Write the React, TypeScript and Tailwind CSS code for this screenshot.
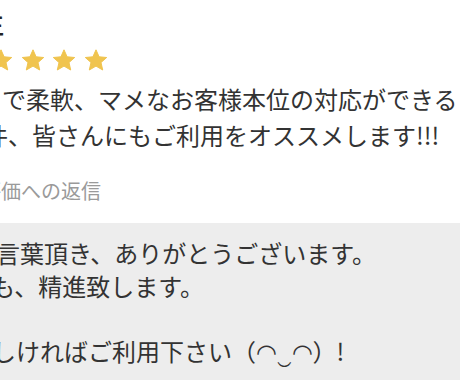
const STAR_COUNT = 4;

function Star() {
  return (
    <svg width="24" height="23" viewBox="0 0 24 23" className="shrink-0">
      <path
        d="M12 0.8l3.1 7 7.6 0.7-5.7 5 1.7 7.5L12 17.1 5.3 21l1.7-7.5-5.7-5 7.6-0.7z"
        fill="#f0c44f"
        stroke="#f0c44f"
        strokeWidth="1"
        strokeLinejoin="round"
      />
    </svg>
  );
}

export default function App() {
  return (
    <div
      className="flex h-[380px] w-[460px] flex-col overflow-hidden bg-white text-[#333]"
      style={{ fontFamily: '"Noto Sans CJK JP", "Noto Sans", sans-serif' }}
    >
      <div className="ml-[-18px] mt-[10px] text-[22px] font-bold leading-[28px] text-[#222]">王</div>

      <div className="ml-[-11px] mt-[11px] flex gap-[7.5px]">
        {Array.from({ length: STAR_COUNT }).map((_, i) => (
          <Star key={i} />
        ))}
      </div>

      <div className="mt-[9px] whitespace-nowrap text-[24px] leading-[36px]">
        <div className="ml-[2px]">で柔軟、マメなお客様本位の対応ができる</div>
        <div className="ml-[-16px]">件、皆さんにもご利用をオススメします!!!</div>
      </div>

      <div className="ml-[-19px] mt-[24px] whitespace-nowrap text-[20px] leading-[28px] text-[#9a9a9a]">
        評価への返信
      </div>

      <div className="mt-[18px] flex-1 whitespace-nowrap bg-[#ededed] pt-[14px] text-[24px] leading-[32.5px]">
        <div className="ml-[-28px]">お言葉頂き、ありがとうございます。</div>
        <div className="ml-[-57px]">今後も、精進致します。</div>
        <div className="h-[32.5px]" />
        <div className="ml-[-32px]">宜しければご利用下さい（◠‿◠）!</div>
      </div>
    </div>
  );
}
